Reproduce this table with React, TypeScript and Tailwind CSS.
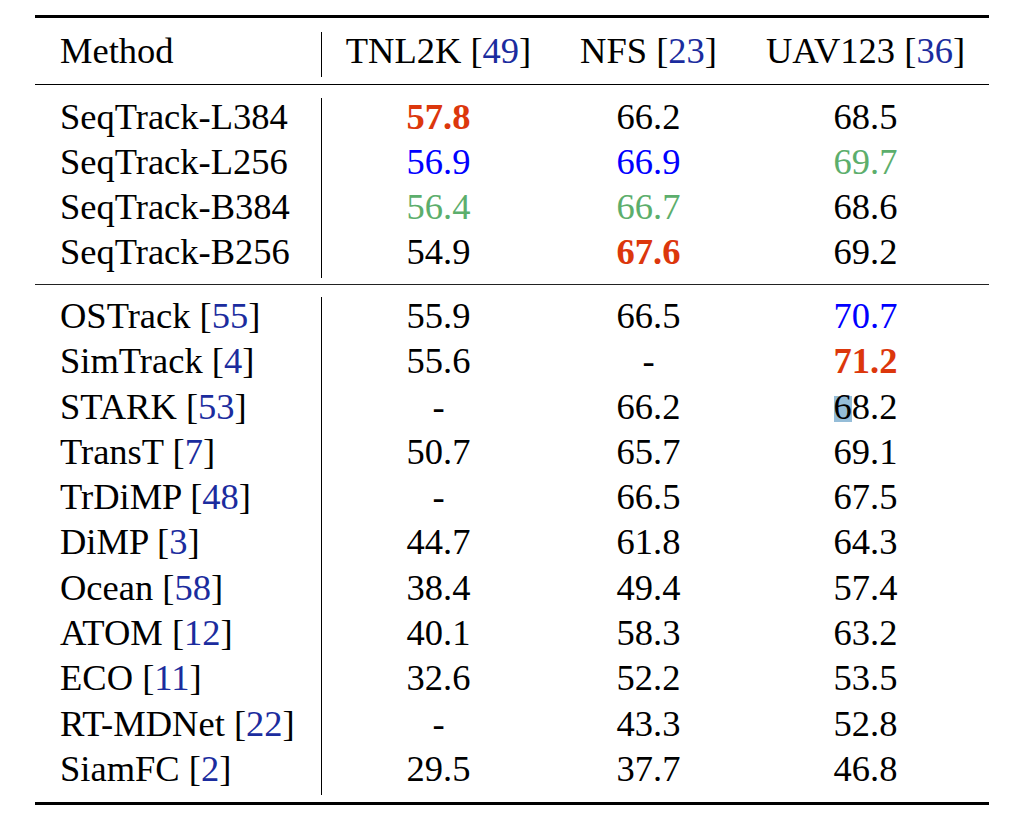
import React from 'react'

type Tone = 'plain' | 'first' | 'second' | 'third'

interface Cell {
  v: string
  tone?: Tone
  mark?: boolean
}

interface Row {
  name: string
  cite?: string
  cells: Cell[]
}

const toneClass: Record<Tone, string> = {
  plain: 'text-black',
  first: 'font-bold text-[#dc370c]',
  second: 'text-[#0000ff]',
  third: 'text-[#5cae6c]',
}

const ours: Row[] = [
  { name: 'SeqTrack-L384', cells: [{ v: '57.8', tone: 'first' }, { v: '66.2' }, { v: '68.5' }] },
  { name: 'SeqTrack-L256', cells: [{ v: '56.9', tone: 'second' }, { v: '66.9', tone: 'second' }, { v: '69.7', tone: 'third' }] },
  { name: 'SeqTrack-B384', cells: [{ v: '56.4', tone: 'third' }, { v: '66.7', tone: 'third' }, { v: '68.6' }] },
  { name: 'SeqTrack-B256', cells: [{ v: '54.9' }, { v: '67.6', tone: 'first' }, { v: '69.2' }] },
]

const others: Row[] = [
  { name: 'OSTrack', cite: '55', cells: [{ v: '55.9' }, { v: '66.5' }, { v: '70.7', tone: 'second' }] },
  { name: 'SimTrack', cite: '4', cells: [{ v: '55.6' }, { v: '-' }, { v: '71.2', tone: 'first' }] },
  { name: 'STARK', cite: '53', cells: [{ v: '-' }, { v: '66.2' }, { v: '68.2', mark: true }] },
  { name: 'TransT', cite: '7', cells: [{ v: '50.7' }, { v: '65.7' }, { v: '69.1' }] },
  { name: 'TrDiMP', cite: '48', cells: [{ v: '-' }, { v: '66.5' }, { v: '67.5' }] },
  { name: 'DiMP', cite: '3', cells: [{ v: '44.7' }, { v: '61.8' }, { v: '64.3' }] },
  { name: 'Ocean', cite: '58', cells: [{ v: '38.4' }, { v: '49.4' }, { v: '57.4' }] },
  { name: 'ATOM', cite: '12', cells: [{ v: '40.1' }, { v: '58.3' }, { v: '63.2' }] },
  { name: 'ECO', cite: '11', cells: [{ v: '32.6' }, { v: '52.2' }, { v: '53.5' }] },
  { name: 'RT-MDNet', cite: '22', cells: [{ v: '-' }, { v: '43.3' }, { v: '52.8' }] },
  { name: 'SiamFC', cite: '2', cells: [{ v: '29.5' }, { v: '37.7' }, { v: '46.8' }] },
]

const cols = 'grid grid-cols-[287px_233px_187px_247px] leading-[38.4px]'

function Cite({ n }: { n: string }) {
  return (
    <>
      {' '}[<span className="text-[#1b2c9e]">{n}</span>]
    </>
  )
}

function Value({ cell }: { cell: Cell }) {
  const cls = toneClass[cell.tone ?? 'plain']
  if (cell.mark) {
    // selection highlight over the first digit
    return (
      <span className={cls}>
        <span className="relative inline-block">
          <span className="absolute left-0 right-0 top-[8px] h-[26px] bg-[#95bdd8]" />
          <span className="relative">{cell.v[0]}</span>
        </span>
        {cell.v.slice(1)}
      </span>
    )
  }
  return <span className={cls}>{cell.v}</span>
}

function BodyRow({ row, tall }: { row: Row; tall?: boolean }) {
  return (
    <div className={`${cols} ${tall ? 'h-[45.3px]' : 'h-[45px]'}`}>
      <div className="border-r border-black pl-[25px]">
        {row.name}
        {row.cite && <Cite n={row.cite} />}
      </div>
      {row.cells.map((c, i) => (
        <div key={i} className="text-center">
          <Value cell={c} />
        </div>
      ))}
    </div>
  )
}

export default function App() {
  return (
    <div
      className="min-h-[822px] w-[1018px] bg-white pl-[35px] pt-[15px] text-[36.5px] text-black"
      style={{ fontFamily: '"Liberation Serif", "Times New Roman", serif' }}
    >
      <div className="w-[954px]">
        <div className="h-[3px] bg-black" />

        <div className={`${cols} mt-[13.5px] h-[45px]`}>
          <div className="border-r border-black pl-[25px]">Method</div>
          <div className="text-center">
            TNL2K<Cite n="49" />
          </div>
          <div className="text-center">
            NFS<Cite n="23" />
          </div>
          <div className="text-center">
            UAV123<Cite n="36" />
          </div>
        </div>

        <div className="mt-[7px] h-[1.5px] bg-black" />

        <div className="mt-[12.5px]">
          {ours.map((r) => (
            <BodyRow key={r.name} row={r} />
          ))}
        </div>

        <div className="mt-[6px] h-[1.5px] bg-[#222]" />

        <div className="mt-[12px]">
          {others.map((r) => (
            <BodyRow key={r.name} row={r} tall />
          ))}
        </div>

        <div className="mt-[6.7px] h-[3px] bg-black" />
      </div>
    </div>
  )
}
